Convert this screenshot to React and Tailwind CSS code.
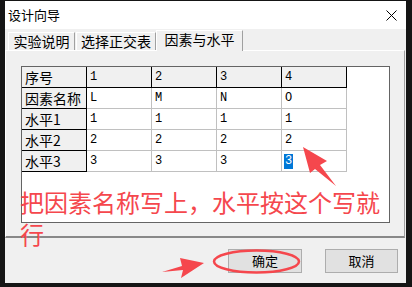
const cjk = { fontFamily: '"Noto Sans CJK SC", "Noto Sans", sans-serif' };
const mono = { fontFamily: '"Liberation Mono", monospace' };

const header = ["1", "2", "3", "4"];
const rows = [
  { label: "因素名称", values: ["L", "M", "N", "O"] },
  { label: "水平1", values: ["1", "1", "1", "1"] },
  { label: "水平2", values: ["2", "2", "2", "2"] },
  { label: "水平3", values: ["3", "3", "3", "3"] },
];

const FixedCell = ({ children, text }) => (
  <div
    className={`h-[21px] box-border border-r border-b border-black bg-[#f0f0f0] flex items-center pl-[3px] text-black ${
      text ? "text-[14px]" : "text-[12px]"
    }`}
    style={text ? cjk : mono}
  >
    {children}
  </div>
);

const DataCell = ({ children }) => (
  <div
    className="h-[21px] box-border border-r border-b border-[#c0c0c0] bg-white flex items-center pl-[3px] text-[12px] text-black"
    style={mono}
  >
    {children}
  </div>
);

const Tab = ({ label, width, active }) =>
  active ? (
    <div
      className="h-[21px] -mb-[1px] box-border border-l border-t border-white border-r border-r-[#a0a0a0] bg-[#f0f0f0] flex items-center justify-center pb-[4px] text-[14px] text-black relative z-10"
      style={{ width, ...cjk }}
    >
      {label}
    </div>
  ) : (
    <div
      className="h-[18px] box-border border-l border-t border-white border-r border-r-[#a0a0a0] bg-[#f0f0f0] flex items-center justify-center text-[14px] text-black"
      style={{ width, ...cjk }}
    >
      {label}
    </div>
  );

export default function App() {
  return (
    <div className="relative w-[412px] h-[287px] bg-[#151515] overflow-hidden">
      <div className="ml-[5px] mt-[1px] w-[401px] h-[282px] bg-[#f0f0f0] flex flex-col">
        {/* title bar */}
        <div className="h-[28px] bg-white flex items-center justify-between pl-[3px] pr-[9px]">
          <span className="text-[13px] text-black" style={cjk}>
            设计向导
          </span>
          <svg width="11" height="11" viewBox="0 0 11 11">
            <path d="M0.5 0.5 L10.5 10.5 M10.5 0.5 L0.5 10.5" stroke="#000" strokeWidth="1" />
          </svg>
        </div>

        {/* tabs */}
        <div className="h-[21px] flex items-end pl-[3px]">
          <Tab label="实验说明" width={67} />
          <div className="w-[1px]" />
          <Tab label="选择正交表" width={80} />
          <Tab label="因素与水平" width={87} active />
        </div>

        {/* tab page */}
        <div className="h-[188px] box-border border-t border-l border-white border-r border-r-[#a0a0a0] border-b-2 border-b-[#888888] mr-[1px] pl-[15px] pt-[15px]">
          <div className="w-[369px] h-[157px] box-border border border-[#646464] bg-white">
            <div className="grid grid-cols-[repeat(5,65px)]">
              <FixedCell text>序号</FixedCell>
              {header.map((h) => (
                <FixedCell key={h}>{h}</FixedCell>
              ))}
              {rows.map((r, ri) => (
                <div key={r.label} className="contents">
                  <FixedCell text>{r.label}</FixedCell>
                  {r.values.map((v, vi) => (
                    <DataCell key={vi}>
                      {ri === 3 && vi === 3 ? (
                        <span className="bg-[#0078d7] text-white leading-[15px] px-[1px] -ml-[1px]">{v}</span>
                      ) : (
                        v
                      )}
                    </DataCell>
                  ))}
                </div>
              ))}
            </div>
          </div>
        </div>

        {/* buttons */}
        <div className="flex justify-end gap-[23px] pr-[8px] pt-[11px]">
          <button
            className="w-[74px] h-[24px] box-border border border-[#adadad] bg-[#e1e1e1] text-[13px] text-black"
            style={cjk}
          >
            确定
          </button>
          <button
            className="w-[73px] h-[24px] box-border border border-[#adadad] bg-[#e1e1e1] text-[13px] text-black"
            style={cjk}
          >
            取消
          </button>
        </div>
      </div>

      {/* annotation */}
      <div
        className="absolute left-[20px] top-[186px] w-[372px] text-[24px] leading-[32px] text-[#f5474d]"
        style={cjk}
      >
        把因素名称写上，水平按这个写就行
      </div>
      <svg className="absolute inset-0 pointer-events-none" width="412" height="287" viewBox="0 0 412 287">
        <polygon
          points="303,147 327,161 320,165 336,186 315,169 310,173"
          fill="#f5474d"
        />
        <polygon
          points="204,263 180,258 182,266 162,272 183,270 181,278"
          fill="#f5474d"
        />
        <ellipse cx="256.5" cy="261.5" rx="42.5" ry="11" fill="none" stroke="#f5474d" strokeWidth="2.5" />
      </svg>
    </div>
  );
}
